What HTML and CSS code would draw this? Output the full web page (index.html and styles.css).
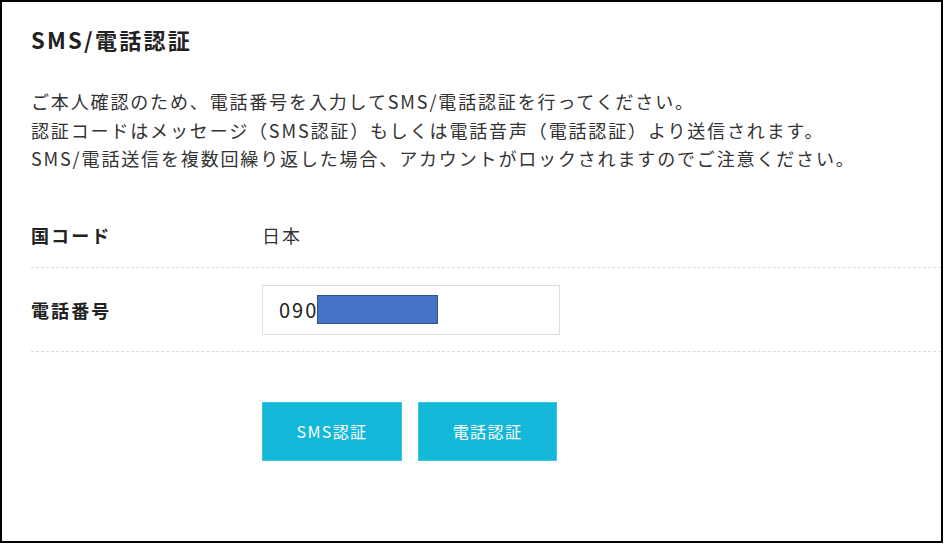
FILE: index.html
```html
<!DOCTYPE html>
<html lang="ja">
<head>
<meta charset="utf-8">
<title>SMS/電話認証</title>
<link rel="stylesheet" href="styles.css">
</head>
<body>
<div class="frame">
  <h1 class="title">SMS/電話認証</h1>
  <p class="lead">ご本人確認のため、電話番号を入力してSMS/電話認証を行ってください。<br>認証コードはメッセージ（SMS認証）もしくは電話音声（電話認証）より送信されます。<br>SMS/電話送信を複数回繰り返した場合、アカウントがロックされますのでご注意ください。</p>
  <div class="form">
    <div class="row row-country">
      <div class="label">国コード</div>
      <div class="value">日本</div>
    </div>
    <div class="row row-phone">
      <div class="label">電話番号</div>
      <div class="value">
        <div class="input"><span class="digits">090</span><span class="mask"></span></div>
      </div>
    </div>
  </div>
  <div class="actions">
    <button class="btn btn-sms">SMS認証</button>
    <button class="btn btn-tel">電話認証</button>
  </div>
</div>
</body>
</html>
```
FILE: styles.css
```css
* { box-sizing: border-box; }
html, body { margin: 0; padding: 0; background: #fff; }
body {
  font-family: "Noto Sans CJK JP", "Noto Sans", sans-serif;
  color: #333;
}
.frame {
  width: 943px;
  height: 543px;
  border: 2px solid #000;
  padding: 22px 0 0 29px;
  overflow: hidden;
}
.title {
  margin: 0;
  font-size: 22px;
  line-height: 30px;
  font-weight: 700;
  letter-spacing: 2.3px;
  color: #222;
}
.lead {
  margin: 33px 0 0;
  font-size: 18px;
  line-height: 28.5px;
  letter-spacing: 1.85px;
  color: #333;
}
.form { margin-top: 32px; }
.row {
  display: flex;
  align-items: center;
  border-bottom: 1px dashed #dcdcdc;
}
.row-country { padding: 16px 0 18px; }
.row-phone { padding: 17px 0 16px; }
.label {
  width: 231px;
  flex: none;
  font-size: 18px;
  line-height: 28px;
  font-weight: 700;
  letter-spacing: 2.1px;
  color: #222;
}
.value {
  font-size: 18px;
  line-height: 28px;
  letter-spacing: 2px;
  color: #333;
}
.input {
  width: 298px;
  height: 50px;
  border: 1px solid #dedede;
  display: flex;
  align-items: center;
  padding-left: 16px;
}
.digits {
  font-size: 20px;
  letter-spacing: 2px;
  color: #222;
}
.mask {
  display: inline-block;
  width: 121px;
  height: 29px;
  background: #4472c4;
  border: 1px solid #2f528f;
  margin-left: -1px;
}
.actions {
  display: flex;
  gap: 16px;
  margin: 50px 0 0 231px;
}
.btn {
  height: 59px;
  border: 1px solid #3cc4e0;
  background: #13b8d9;
  color: #fff;
  font-family: "Noto Sans CJK JP", "Noto Sans", sans-serif;
  font-size: 16px;
  letter-spacing: 1.4px;
  padding: 0;
  cursor: pointer;
}
.btn-sms { width: 140px; }
.btn-tel { width: 139px; }
```
